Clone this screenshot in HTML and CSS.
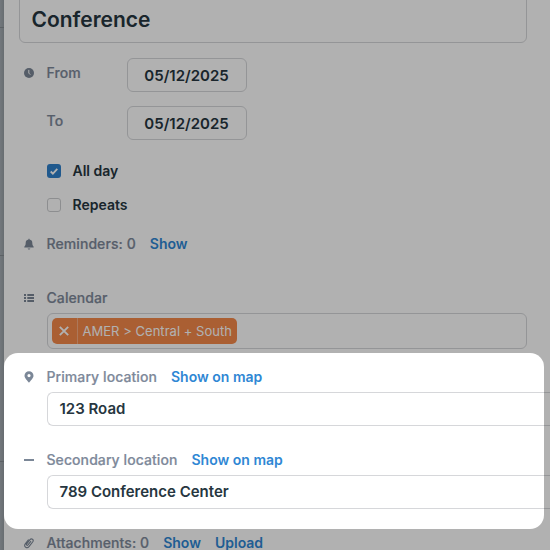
FILE: index.html
```
<!DOCTYPE html>
<html lang="en">
<head>
    <meta charset="utf-8">
    <title>Edit event</title>
    <link rel="stylesheet" href="styles.css">
</head>
<body>
    <!-- edge of the calendar grid behind the editor -->
    <div class="grid-edge">
        <div class="hour hour-first"></div>
        <div class="hour hour-tall"></div>
        <div class="hour hour-mid"></div>
    </div>

    <form class="editor">
        <div class="title-box">Conference</div>

        <div class="row date-row">
            <svg class="icon" viewBox="0 0 10 10"><circle cx="5" cy="5" r="5" fill="currentColor"/><path class="hands" d="M4.8 1.9V5.1L6.3 6.7"/></svg>
            <span class="label date-label">From</span>
            <div class="date">05/12/2025</div>
        </div>
        <div class="row date-row">
            <span class="icon"></span>
            <span class="label date-label">To</span>
            <div class="date">05/12/2025</div>
        </div>

        <div class="check-row">
            <span class="check checked"><svg viewBox="0 0 14 14"><path d="M3.7 7.5L5.9 9.6L10.3 4.9"/></svg></span>
            <span class="check-text">All day</span>
        </div>
        <div class="check-row">
            <span class="check"></span>
            <span class="check-text">Repeats</span>
        </div>

        <div class="row reminders">
            <svg class="icon" viewBox="0 0 10 12"><path fill="currentColor" d="M4.5 0.7H5.5V1.6C7.3 1.9 8.3 3.2 8.3 4.8C8.3 7 8.9 8 9.7 8.8V9.6H0.3V8.8C1.1 8 1.7 7 1.7 4.8C1.7 3.2 2.7 1.9 4.5 1.6ZM3.7 10.5H6.3C6.2 11.2 5.7 11.6 5 11.6S3.8 11.2 3.7 10.5Z"/></svg>
            <span class="label">Reminders: 0</span>
            <a class="link">Show</a>
        </div>

        <div class="row calendar">
            <svg class="icon" viewBox="0 0 10 8"><path fill="currentColor" d="M0 0H2V2H0ZM3.3 0H10V2H3.3ZM0 3H2V5H0ZM3.3 3H10V5H3.3ZM0 6H2V8H0ZM3.3 6H10V8H3.3Z"/></svg>
            <span class="label">Calendar</span>
        </div>
        <div class="field select">
            <div class="tag">
                <span class="tag-remove"><svg viewBox="0 0 10 10"><path d="M0.8 0.8L9.2 9.2M9.2 0.8L0.8 9.2"/></svg></span>
                <span class="tag-name">AMER &gt; Central + South</span>
            </div>
        </div>

        <div class="row primary">
            <svg class="icon" viewBox="0 0 10 12"><path fill="currentColor" fill-rule="evenodd" d="M5 0.2A4.5 4.5 0 0 1 9.5 4.7C9.5 7 6.4 9.9 5 11.8C3.6 9.9 0.5 7 0.5 4.7A4.5 4.5 0 0 1 5 0.2ZM5 3A1.6 1.6 0 1 0 5 6.2A1.6 1.6 0 1 0 5 3Z"/></svg>
            <span class="label">Primary location</span>
            <a class="link">Show on map</a>
        </div>
        <div class="field wide">123 Road</div>

        <div class="row secondary">
            <svg class="icon" viewBox="0 0 10 12"><path fill="currentColor" d="M0 5H10V7H0Z"/></svg>
            <span class="label">Secondary location</span>
            <a class="link">Show on map</a>
        </div>
        <div class="field wide">789 Conference Center</div>

        <div class="row attachments">
            <svg class="icon clip" viewBox="0 0 10 12"><path d="M7 4.2L4 7.9C3.1 8.9 1.9 7.9 2.7 6.8L6 2.6C7.5 0.8 10.2 2.7 8.8 4.8L5 9.7C3 12 -0.5 9.8 1.1 7.1L4.6 2.5"/></svg>
            <span class="label">Attachments: 0</span>
            <a class="link">Show</a>
            <a class="link">Upload</a>
        </div>
    </form>

    <div class="spotlight"></div>
</body>
</html>
```

FILE: styles.css
```
* {
    box-sizing: border-box;
}
body {
    margin: 0;
    width: 550px;
    height: 550px;
    overflow: hidden;
    display: flex;
    position: relative;
    font-family: Inter, "Liberation Sans", sans-serif;
    font-size: 14px;
    font-weight: 600;
    color: #263640;
    background: #fff;
}

.grid-edge {
    width: 4px;
    flex: none;
    background: linear-gradient(to right, #a5adb4, #969da3);
}
.hour {
    border-bottom: 1px solid #858c92;
}
.hour-first {
    height: 28px;
}
.hour-tall {
    height: 228px;
}
.hour-mid {
    height: 206px;
}

.editor {
    flex: none;
    width: 546px;
    padding: 0 0 0 15px;
}
.title-box {
    width: 508px;
    height: 51px;
    margin-top: -8px;
    padding: 0 11.5px;
    border: 1px solid #d6d7da;
    border-radius: 6px;
    font-size: 21px;
    line-height: 53px;
}

.row {
    display: flex;
    align-items: center;
    height: 20px;
    padding-left: 5px;
}
.icon {
    flex: none;
    width: 10px;
    height: 12px;
    margin-right: 12.5px;
    color: #7b8797;
}
.hands {
    fill: none;
    stroke: #fff;
    stroke-width: 1;
}
.clip path {
    fill: none;
    stroke: currentColor;
    stroke-width: 1.1;
}
.label {
    padding-bottom: 2px;
    color: #7e899a;
    font-weight: 500;
    letter-spacing: 0.08px;
    -webkit-text-stroke: 0.2px #7e899a;
}
.link {
    margin-left: 14px;
    padding-bottom: 2px;
    color: #2f87d4;
}

.date-row {
    height: 34px;
    margin-top: 15px;
}
.date-row + .date-row {
    margin-top: 14px;
}
.date-row .icon,
.date-label {
    margin-bottom: 4px;
}
.date-label {
    width: 80.5px;
}
.date {
    width: 120px;
    height: 34px;
    padding-right: 1px;
    border: 1px solid #d6d7da;
    border-radius: 6px;
    text-align: center;
    font-size: 15px;
    line-height: 33px;
}

.check-row {
    display: flex;
    align-items: center;
    height: 34px;
    padding-left: 28px;
}
.date-row + .check-row {
    margin-top: 14px;
}
.check {
    width: 14px;
    height: 14px;
    margin-right: 11.5px;
    border: 1px solid #cccdd0;
    border-radius: 3px;
}
.check-text {
    padding-bottom: 2px;
}
.checked {
    border: 0;
    background: #2f80cb;
}
.check svg {
    display: block;
}
.check path {
    fill: none;
    stroke: #fff;
    stroke-width: 1.8;
}

.reminders {
    margin-top: 12px;
}
.calendar {
    margin-top: 34px;
}
.field {
    height: 34px;
    margin: 5px 0 0 28px;
    padding: 0 11.5px;
    border: 1px solid #d6d7da;
    border-radius: 6px;
    font-size: 15px;
    line-height: 31px;
}
/* runs on past the edge of the panel */
.wide {
    border-right: 0;
    border-top-right-radius: 0;
    border-bottom-right-radius: 0;
}
.select {
    width: 480px;
    height: 36px;
    padding: 4px;
}
.tag {
    display: inline-flex;
    height: 26px;
    border-radius: 5px;
    background: #f5894a;
    color: #fff;
    font-size: 13px;
    font-weight: 400;
    line-height: 26px;
    letter-spacing: 0.03px;
    vertical-align: top;
}
.tag-remove {
    display: flex;
    align-items: center;
    justify-content: center;
    width: 26px;
    padding-right: 2px;
    border-right: 1px solid #f9ad82;
}
.tag-remove svg {
    width: 10px;
    height: 10px;
}
.tag-remove path {
    stroke: #fff;
    stroke-width: 1.9;
}
.tag-name {
    padding: 0 4.5px;
}

.primary {
    margin-top: 18px;
}
.secondary,
.attachments {
    margin-top: 24px;
}

/* dims everything except the location fields */
.spotlight {
    position: absolute;
    left: 4px;
    top: 353px;
    width: 540px;
    height: 176px;
    border-radius: 14px;
    box-shadow: 0 0 0 600px rgba(0, 0, 0, 0.306);
}
```
